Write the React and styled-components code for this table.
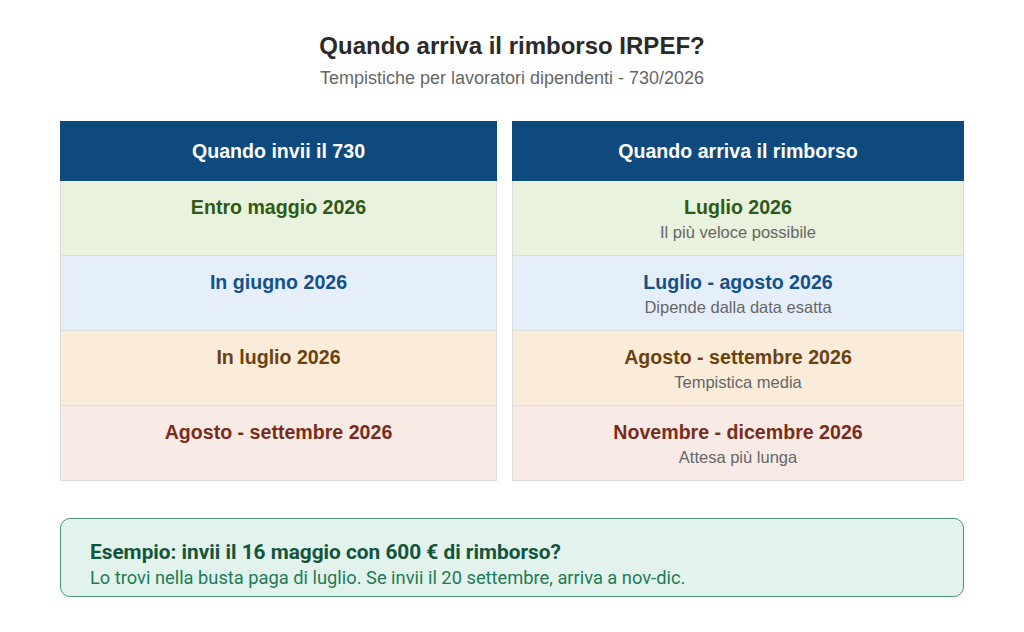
import React from "react";
import styled, { createGlobalStyle } from "styled-components";

const Global = createGlobalStyle`
  body {
    margin: 0;
    background: #ffffff;
    font-family: "Liberation Sans", Arial, sans-serif;
  }
`;

const tones = {
  green: { bg: "#e8f2dd", fg: "#2e5a16" },
  blue: { bg: "#e5eff9", fg: "#15508b" },
  orange: { bg: "#faecd9", fg: "#6a4212" },
  red: { bg: "#f8eae5", fg: "#7a2c1a" },
};

const rows = [
  { tone: "green", send: "Entro maggio 2026", when: "Luglio 2026", note: "Il più veloce possibile" },
  { tone: "blue", send: "In giugno 2026", when: "Luglio - agosto 2026", note: "Dipende dalla data esatta" },
  { tone: "orange", send: "In luglio 2026", when: "Agosto - settembre 2026", note: "Tempistica media" },
  { tone: "red", send: "Agosto - settembre 2026", when: "Novembre - dicembre 2026", note: "Attesa più lunga" },
];

export default function App() {
  return (
    <>
      <Global />
      <Page>
        <Header>
          <Title>Quando arriva il rimborso IRPEF?</Title>
          <Subtitle>Tempistiche per lavoratori dipendenti - 730/2026</Subtitle>
        </Header>
        <Columns>
          <Column $width={437}>
            <ColHead>Quando invii il 730</ColHead>
            {rows.map((r) => (
              <Cell key={r.send} $tone={r.tone}>
                <Main $tone={r.tone}>{r.send}</Main>
              </Cell>
            ))}
          </Column>
          <Column $width={452}>
            <ColHead>Quando arriva il rimborso</ColHead>
            {rows.map((r) => (
              <Cell key={r.when} $tone={r.tone}>
                <Main $tone={r.tone}>{r.when}</Main>
                <Note>{r.note}</Note>
              </Cell>
            ))}
          </Column>
        </Columns>
        <Example>
          <ExTitle>Esempio: invii il 16 maggio con 600 € di rimborso?</ExTitle>
          <ExText>
            Lo trovi nella busta paga di luglio. Se invii il 20 settembre, arriva a nov-dic.
          </ExText>
        </Example>
      </Page>
    </>
  );
}

const Page = styled.div`
  width: 904px;
  margin: 0 auto;
  padding-top: 31px;
`;

const Header = styled.header`
  display: flex;
  flex-direction: column;
  align-items: center;
  gap: 6px;
`;

const Title = styled.h1`
  margin: 0;
  font-size: 24px;
  line-height: 30px;
  font-weight: 700;
  color: #2a2a2a;
`;

const Subtitle = styled.p`
  margin: 0;
  font-size: 18px;
  line-height: 22px;
  color: #666666;
`;

const Columns = styled.div`
  display: flex;
  gap: 15px;
  margin-top: 32px;
`;

const Column = styled.div`
  width: ${(p) => p.$width}px;
  display: flex;
  flex-direction: column;
`;

const ColHead = styled.div`
  height: 60px;
  display: flex;
  align-items: center;
  justify-content: center;
  background: #0e4a7e;
  color: #ffffff;
  font-size: 19.6px;
  font-weight: 700;
`;

const Cell = styled.div`
  height: 75px;
  box-sizing: border-box;
  padding-top: 14px;
  display: flex;
  flex-direction: column;
  align-items: center;
  gap: 3px;
  background: ${(p) => tones[p.$tone].bg};
  border: 1px solid #dcdcdc;
  border-top: none;
`;

const Main = styled.div`
  font-size: 19.6px;
  line-height: 24px;
  font-weight: 700;
  color: ${(p) => tones[p.$tone].fg};
`;

const Note = styled.div`
  font-size: 16.5px;
  line-height: 20px;
  color: #666666;
`;

const Example = styled.div`
  margin-top: 37px;
  box-sizing: border-box;
  height: 79px;
  padding: 20px 29px 0;
  border: 1px solid #4d9274;
  border-radius: 10px;
  background: #e1f3ec;
  font-family: Roboto, "Liberation Sans", sans-serif;
`;

const ExTitle = styled.div`
  font-size: 20.8px;
  line-height: 26px;
  font-weight: 700;
  color: #12553d;
`;

const ExText = styled.div`
  margin-top: 2px;
  font-size: 18.3px;
  line-height: 22px;
  color: #1f7a55;
`;
